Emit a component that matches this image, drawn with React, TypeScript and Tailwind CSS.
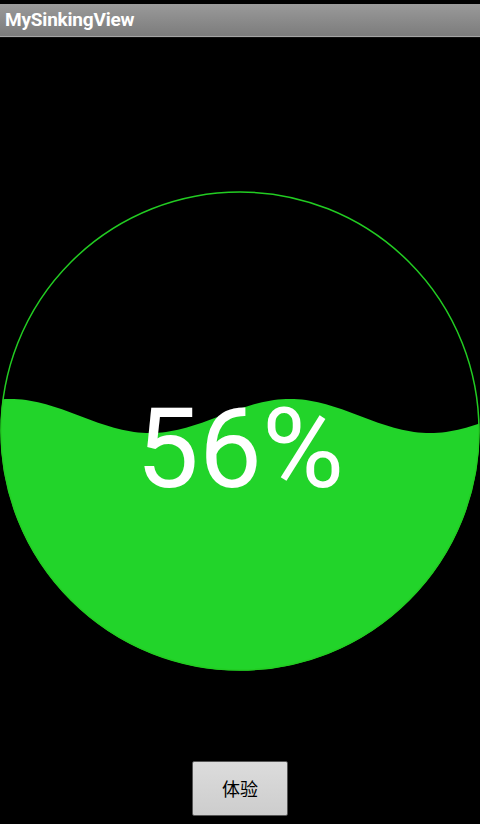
function wavePath() {
  const mid = 225
  const amp = 17
  const len = 280
  const peak = 10
  let d = `M -10 ${mid}`
  for (let x = -10; x <= 490; x += 4) {
    const y = mid - amp * Math.cos(((x - peak) / len) * Math.PI * 2)
    d += ` L ${x} ${y.toFixed(2)}`
  }
  d += ' L 490 490 L -10 490 Z'
  return d
}

function SinkingView({ percent }: { percent: number }) {
  return (
    <div className="relative w-[480px] h-[480px]">
      <svg width="480" height="480" viewBox="0 0 480 480" className="block">
        <defs>
          <clipPath id="circ">
            <circle cx="240" cy="240" r="239.5" />
          </clipPath>
        </defs>
        <path d={wavePath()} fill="#22d42a" clipPath="url(#circ)" />
        <circle cx="240" cy="240" r="239" fill="none" stroke="#22cc22" strokeWidth="1.5" />
      </svg>
      <span className="absolute left-0 right-0 top-[202px] text-center text-white text-[112px] leading-none font-['Roboto',sans-serif]">
        {percent}%
      </span>
    </div>
  )
}

export default function App() {
  return (
    <div className="w-[480px] h-[824px] bg-black flex flex-col overflow-hidden">
      <div className="h-[4px] bg-black" />
      <div className="h-[32px] bg-gradient-to-b from-[#9a9a9a] to-[#7c7c7c] flex items-center px-[5px]">
        <span className="text-white font-bold text-[19px] font-['Roboto',sans-serif] tracking-[-0.2px]">
          MySinkingView
        </span>
      </div>
      <div className="h-[1px] bg-[#a5a5a5]" />
      <div className="h-[1px] bg-[#111]" />
      <div className="mt-[153px] flex justify-center">
        <SinkingView percent={56} />
      </div>
      <div className="mt-[90px] flex justify-center">
        <button className="w-[96px] h-[55px] border border-[#555] bg-gradient-to-b from-[#dcdcdc] to-[#cdcdcd] rounded-[2px] text-black text-[18px] font-['Noto_Sans_CJK_SC',sans-serif]">
          体验
        </button>
      </div>
    </div>
  )
}
